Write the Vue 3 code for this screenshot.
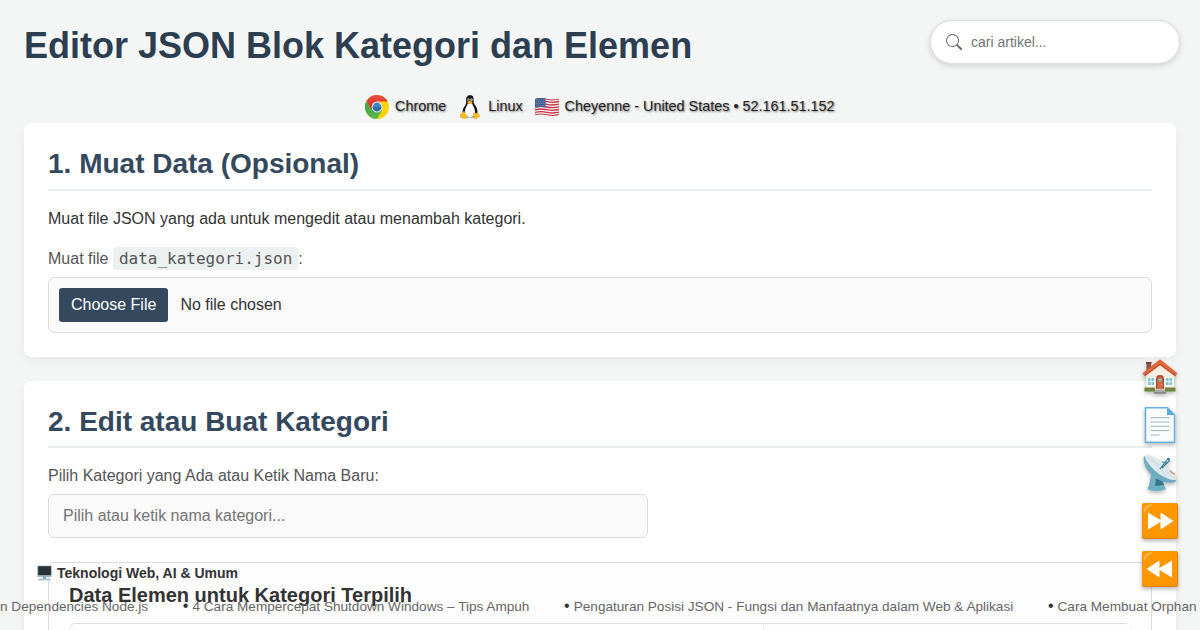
<script setup>
const ticker = [
  'n Dependencies Node.js',
  '4 Cara Mempercepat Shutdown Windows – Tips Ampuh',
  'Pengaturan Posisi JSON - Fungsi dan Manfaatnya dalam Web & Aplikasi',
  'Cara Membuat Orphan',
]
</script>

<template>
  <div class="page">
    <header class="head">
      <h1>Editor JSON Blok Kategori dan Elemen</h1>
      <div class="search">
        <svg width="16" height="16" viewBox="0 0 16 16" fill="#666">
          <path d="M11.742 10.344a6.5 6.5 0 1 0-1.397 1.398h-.001q.044.06.098.115l3.85 3.85a1 1 0 0 0 1.415-1.414l-3.85-3.85a1 1 0 0 0-.115-.1zM12 6.5a5.5 5.5 0 1 1-11 0 5.5 5.5 0 0 1 11 0" />
        </svg>
        <span>cari artikel...</span>
      </div>
    </header>

    <div class="status">
      <svg class="ico" width="24" height="24" viewBox="0 0 24 24">
        <defs>
          <linearGradient id="cr" x1="0" y1="0" x2="0" y2="1"><stop offset="0" stop-color="#ee5147" /><stop offset="1" stop-color="#c9211e" /></linearGradient>
          <linearGradient id="cg" x1="0" y1="0" x2="1" y2="1"><stop offset="0" stop-color="#3aa445" /><stop offset="1" stop-color="#62bd4d" /></linearGradient>
        </defs>
        <circle cx="12" cy="12" r="12" fill="#fcd209" />
        <path d="M1.6 6A12 12 0 0 0 12 24L17.2 15 12 12 6.8 15Z" fill="url(#cg)" />
        <path d="M1.6 6A12 12 0 0 1 22.6 6.6L12 6.6 6.8 15Z" fill="url(#cr)" />
        <circle cx="12" cy="12" r="5.4" fill="#f1f1f1" />
        <circle cx="12" cy="12" r="4.4" fill="#4288c4" />
        <path d="M7.6 12a4.4 4.4 0 0 0 8.8 0Z" fill="#326fa9" />
      </svg>
      <span class="browser">Chrome</span>
      <svg class="ico tux" width="20" height="24" viewBox="0 0 20 24">
        <path d="M10 .2c-3 0-4 2-3.8 5 .1 2.700-.2 4-1.600 6.100C2.800 14 1.800 17 3.200 20l4 2.200h6l4-3c.8-3-.2-6.200-1.900-8.600-1.500-2.200-1.700-3.200-1.700-5.400C13.600 2 13 .2 10 .2z" fill="#111" />
        <path d="M7.700 8.500c-.4 2.200-3 5.100-3 8.400 0 3 2.200 5.200 5.200 5.200 3.100 0 5.200-2 5.200-5.200 0-3.300-2.200-5.400-3-8.600z" fill="#fff" />
        <ellipse cx="8.500" cy="4.800" rx="1.100" ry="1.500" fill="#ddd" /><ellipse cx="11.400" cy="4.800" rx="1.200" ry="1.500" fill="#ddd" />
        <circle cx="8.700" cy="5" r=".6" /><circle cx="11.200" cy="5" r=".6" />
        <path d="M7.300 7c1-1.200 3.900-1.600 5.300 0 .1 1-2 2-2.900 2-.9 0-2.500-1-2.400-2z" fill="#f2b61c" />
        <path d="M3.400 16.400c1.400.3 2 2.600 3.400 4.200 1.100 1.700-.1 3.200-2 3-1.400-.2-2.700-.9-4.100-1.200-1-.5-.1-1.700-.3-3 .1-1 1.300-.8 1.700-1.500.3-.6.500-1.500 1.300-1.500zM14.300 17.500c.8.900 2.400.8 3.300.2.600.8.500 1.700 1.700 2.500.8.700.8 1.300-.2 1.700-1.500.5-2.300 1.800-3.900 1.800-2.200-.1-2-2-1.600-3.600.1-1-.1-2.100.7-2.600z" fill="#f6bd20" stroke="#a67a09" stroke-width=".3" />
      </svg>
      <span class="os">Linux</span>
      <svg class="ico flag" width="24" height="18" viewBox="0 0 25 18" preserveAspectRatio="none">
        <defs><clipPath id="wave"><path d="M0 .9Q6-.9 12.500.700T25 .5V17Q19 18.700 12.500 17.200T0 17.300Z" /></clipPath></defs>
        <g clip-path="url(#wave)">
          <path d="M0 0H25V18H0Z" fill="#f2f2f2" />
          <g fill="none" stroke="#ce3048" stroke-width="1.350">
            <path v-for="n in 7" :key="n" :d="`M0 ${n * 2.65 - 1.5}q6-1.500 12.500-.1t12.500-.2`" />
          </g>
          <path d="M0 0H11V9.300Q5 8.500 0 9.500Z" fill="#3f5c94" />
          <g stroke="#d4dced" stroke-width=".6" stroke-dasharray=".6 1.200"><path d="M1 2H10.500M1.800 3.800H10.500M1 5.600H10.500M1.800 7.400H10.500" /></g>
        </g>
      </svg>
      <span>Cheyenne - United States • 52.161.51.152</span>
    </div>

    <section class="card first">
      <h2>1. Muat Data (Opsional)</h2>
      <p>Muat file JSON yang ada untuk mengedit atau menambah kategori.</p>
      <label>Muat file <code>data_kategori.json</code>:</label>
      <div class="file"><button type="button">Choose File</button><span>No file chosen</span></div>
    </section>

    <section class="card second">
      <h2>2. Edit atau Buat Kategori</h2>
      <label>Pilih Kategori yang Ada atau Ketik Nama Baru:</label>
      <div class="input">Pilih atau ketik nama kategori...</div>
      <div class="panel">
        <h3>Data Elemen untuk Kategori Terpilih</h3>
        <div class="table"><i></i><i></i></div>
      </div>
    </section>

    <nav class="float">
      <svg viewBox="0 0 36 36">
        <path d="M4.500 3.500h4.500v11H4.500z" fill="#8c5145" /><path d="M4 3h5.500v2H4z" fill="#744238" />
        <path d="M4 15L18 3l14 12v17H4z" fill="#fbeee0" />
        <path d="M.5 14.200L18 .3l17.500 13.900-1.500 2.200L18 4.500 2 16.400z" fill="#e2653b" /><path d="M2 16.200L18 4.300l16 11.900-1 1L18 6.300 3 17.200z" fill="#bd4b2d" />
        <g fill="#7fc6ce" stroke="#fff" stroke-width=".8"><path d="M5.500 18.500h7v8h-7zM23.500 18.500h7v8h-7zM9 18.500v8M5.500 22.500h7M27 18.500v8M23.500 22.500h7" /></g>
        <path d="M14 30V20a4 4 0 0 1 8 0v10z" fill="#a94c36" /><path d="M15.300 30V20.500a2.700 2.700 0 0 1 5.400 0V30z" fill="#d06c4a" />
        <path d="M16.500 19.500h3v3h-3z" fill="#84bcc1" /><circle cx="20" cy="25.500" r=".6" fill="#ffd65a" />
        <path d="M2.500 28.500h10.500v4H2.500zM23 28.500h10.500v4H23z" fill="#71853a" /><path d="M13 30.500h10v3H13z" fill="#aaa" /><path d="M12 33h12v1.800H12z" fill="#888" />
      </svg>
      <svg viewBox="0 0 36 36">
        <path d="M3.500.8h22L32.500 7.800V35.200h-29z" fill="#fafcff" stroke="#64b1df" stroke-width="1.500" />
        <path d="M25 1l7.500 7H25z" fill="#55aade" />
        <path d="M8.500 10.700h19M8.500 15h19M8.500 19.300h19M8.500 23.600h19M8.500 28h9" stroke="#a3b6c2" stroke-width="1" />
      </svg>
      <svg viewBox="0 0 36 36">
        <path d="M9 20L7 31q-2 2-1 3.500 8 3 18-.3l-2-4-3-9z" fill="#6eafc2" /><path d="M14 23l-1 8 9-1-3-8z" fill="#337489" />
        <path d="M2 1C0 12 10 24 22 27c7 1.500 11 1 12.500-2C30 14 15 1 2 1z" fill="#6fabc0" />
        <path d="M2.500.8C11-3 31 14 34.500 24.500 27 28 6 14 2.500.8z" fill="#dce8ec" />
        <path d="M4 2C14 7 26 17 33 24M9 2l16 21" stroke="#c0d1d8" stroke-width=".6" fill="none" />
        <path d="M18 14L26 3.500M20 13l8-8M20 7l6 1" stroke="#347d92" stroke-width="1.200" /><circle cx="26.500" cy="4" r="1.300" fill="#347d92" />
        <path d="M28 16l5 3.500" stroke="#df8069" stroke-width="1.200" />
      </svg>
      <svg v-for="d in ['next', 'prev']" :key="d" viewBox="0 0 36 36">
        <rect width="36" height="36" rx="2.500" fill="#eb7d09" /><rect width="35" height="34.800" rx="2.500" fill="#ff9800" />
        <path d="M2 8q0-6 7-6.500 3 0 1 1.300Q5 4 3 8.500 2 10 2 8z" fill="#ffbd58" />
        <path v-if="d === 'next'" d="M6 9.500L18.500 17V9.500L31.500 18l-13 8.500V19L6 26.500z" fill="#fff" />
        <path v-else d="M30 9.500L17.500 17V9.500L4.500 18l13 8.500V19L30 26.500z" fill="#fff" />
      </svg>
    </nav>

    <div class="topic">
      <svg width="15" height="16" viewBox="0 0 15 16">
        <path d="M.5 .8h14v10.700H.5z" fill="#6c8693" /><path d="M1.200 1.400h12.700v8.700H1.200z" fill="#293338" /><path d="M.5 10.300h14v1.500H.5z" fill="#9fb7c1" />
        <path d="M6 11.800h3v2H6z" fill="#7794a1" /><path d="M2 13.500h11l1 2H1z" fill="#a8c8d5" />
      </svg>
      <span>Teknologi Web, AI &amp; Umum</span>
    </div>
    <div class="ticker">
      <span v-for="(t, n) in ticker" :key="n"><b v-if="n">•</b>{{ t }}</span>
    </div>
  </div>
</template>

<style>
body { margin: 0; overflow: hidden; }
</style>

<style scoped>
.page { position: relative; width: 1200px; height: 630px; overflow: hidden; background: #f4f6f6; color: #333; font: 16px "Liberation Sans", Arial, sans-serif; box-sizing: border-box; }
.page * { box-sizing: border-box; }
.head { display: flex; justify-content: space-between; height: 93px; padding: 20px 20px 0 24px; }
h1 { margin: 5px 0 0; font-size: 36px; line-height: 42px; color: #2c3e50; white-space: nowrap; }
.search { display: flex; align-items: center; gap: 9px; width: 250px; height: 44px; padding: 0 15px; border: 1px solid #ddd; border-radius: 22px; background: #fff; box-shadow: 0 2px 6px rgba(0,0,0,.15); font-size: 14px; color: #757575; }
.status { display: flex; align-items: center; height: 30px; padding: 0 0 4px 365px; font-size: 14.4px; line-height: 20px; color: #222; text-shadow: 1px 1px 2px rgba(0,0,0,.5); white-space: nowrap; }
.ico { flex: none; margin: 2px 6px 0 0; }
.tux { margin-left: 14px; margin-right: 8px; }
.flag { margin-left: 12px; margin-right: 6px; }
.card { margin: 0 24px 24px; padding: 24px; border-radius: 8px; background: #fff; box-shadow: 0 4px 12px rgba(0,0,0,.05); }
.first { height: 234px; }
.second { height: 400px; }
h2 { height: 44px; margin: 0; border-bottom: 2px solid #eaedee; font-size: 28px; line-height: 33px; color: #34495e; }
.second h2 { height: 43px; }
p { margin: 18px 0 0; line-height: 20px; }
label { display: block; color: #555; line-height: 26px; }
p + label { margin-top: 17px; }
code { padding: 2px 6px; border-radius: 4px; background: #ecf0f1; font: 16px "DejaVu Sans Mono", monospace; }
.file { display: flex; align-items: center; gap: 12px; height: 56px; margin-top: 5px; padding: 0 10px; border: 1px solid #ddd; border-radius: 6px; background: #fafafa; }
button { height: 34px; padding: 0 12px; border: 0; border-radius: 3px; background: #34495e; color: #fff; font: inherit; }
.second label { margin-top: 15px; }
.input { width: 600px; height: 44px; margin-top: 5px; padding: 0 14px; border: 1px solid #ddd; border-radius: 6px; background: #fafafa; color: #757575; line-height: 42px; }
.panel { height: 200px; margin-top: 24px; padding: 20px; border: 1px solid #ddd; border-radius: 6px; background: #fdfdfd; }
h3 { height: 24px; margin: 0; font-size: 20px; line-height: 24px; color: #333; }
.table { display: grid; grid-template-columns: 693px 1fr; margin-top: 16px; height: 80px; border: 1px solid #eee; border-top-color: #ddd; border-radius: 6px; background: #fff; }
.table i + i { border-left: 1px solid #eee; background: #fdfdfd; }
.float { position: absolute; left: 1142px; top: 359.4px; display: grid; gap: 12px; }
.float svg { display: block; width: 36px; height: 36px; overflow: visible; filter: drop-shadow(0 2px 2px rgba(0,0,0,.3)); }
.topic { position: absolute; left: 37px; top: 565px; display: flex; gap: 5px; font-size: 14px; font-weight: bold; line-height: 16px; color: #333; }
.ticker { position: absolute; left: 0; top: 599px; display: flex; gap: 34.700px; font-size: 13.6px; line-height: 16px; color: #666; white-space: nowrap; }
.ticker b { margin-right: 4px; color: #333; font-size: 16px; font-weight: normal; line-height: 1px; }
</style>
